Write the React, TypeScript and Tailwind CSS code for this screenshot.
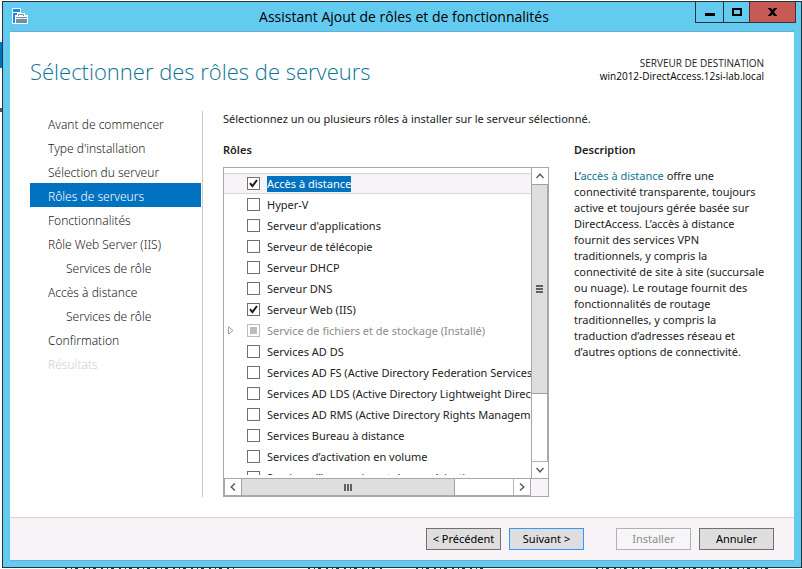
import React from "react";

type Step = {
  label: string;
  nested?: boolean;
  current?: boolean;
  disabled?: boolean;
};

type Role = {
  label: string;
  checked?: boolean;
  selected?: boolean;
  installed?: boolean;
};

const steps: Step[] = [
  { label: "Avant de commencer" },
  { label: "Type d'installation" },
  { label: "Sélection du serveur" },
  { label: "Rôles de serveurs", current: true },
  { label: "Fonctionnalités" },
  { label: "Rôle Web Server (IIS)" },
  { label: "Services de rôle", nested: true },
  { label: "Accès à distance" },
  { label: "Services de rôle", nested: true },
  { label: "Confirmation" },
  { label: "Résultats", disabled: true },
];

const roles: Role[] = [
  { label: "Accès à distance", checked: true, selected: true },
  { label: "Hyper-V" },
  { label: "Serveur d'applications" },
  { label: "Serveur de télécopie" },
  { label: "Serveur DHCP" },
  { label: "Serveur DNS" },
  { label: "Serveur Web (IIS)", checked: true },
  { label: "Service de fichiers et de stockage (Installé)", installed: true },
  { label: "Services AD DS" },
  { label: "Services AD FS (Active Directory Federation Services)" },
  { label: "Services AD LDS (Active Directory Lightweight Directory Services)" },
  { label: "Services AD RMS (Active Directory Rights Management Services)" },
  { label: "Services Bureau à distance" },
  { label: "Services d’activation en volume" },
  { label: "Services d’impression et de numérisation" },
];

const ServerIcon: React.FC = () => (
  <svg width="16" height="17" viewBox="0 0 16 17" aria-hidden="true">
    <path d="M0 0h9v5h4v2h3v9H0z" fill="#fff" />
    <path d="M1 1h7v3H1zM1 5h4v2H3v8H1z" fill="#1e88dc" />
    <path d="M6.5 8V6.5h5V8" fill="none" stroke="#6f8fa6" />
    <path d="M4 9h11v6H4z" fill="#6f8fa6" />
    <path d="M4 10.5h3M12 10.5h3" stroke="#fff" />
    <path d="M7 10h5v1H7z" fill="#dfe8ee" />
  </svg>
);

const TitleBar: React.FC = () => (
  <header className="grid h-[29px] grid-cols-[1fr_auto_1fr] items-start pl-[9px] pr-[5px]">
    <div className="pt-[6px]">
      <ServerIcon />
    </div>
    <h1 className="text-[14px] leading-[29px] text-black">
      Assistant Ajout de rôles et de fonctionnalités
    </h1>
    <div className="flex justify-end">
      <button
        type="button"
        aria-label="Réduire"
        className="flex h-[21px] w-[28px] items-center justify-center border-b border-l border-[#263238]"
      >
        <svg width="10" height="10" viewBox="0 0 10 10">
          <path d="M0 6h10v3H0z" />
        </svg>
      </button>
      <button
        type="button"
        aria-label="Agrandir"
        className="flex h-[21px] w-[26px] items-center justify-center border-b border-l border-[#263238]"
      >
        <svg width="10" height="8" viewBox="0 0 10 8">
          <path d="M1 1h8v6H1z" fill="none" stroke="#000" strokeWidth="2" />
        </svg>
      </button>
      <button
        type="button"
        aria-label="Fermer"
        className="flex h-[21px] w-[47px] items-center justify-center border-x border-b border-[#4a2b2e] bg-[#c75a54]"
      >
        <svg width="9" height="8" viewBox="0 0 9 8">
          <path d="M1.5 0l6 8M7.5 0l-6 8" stroke="#000" strokeWidth="2.4" />
          <path d="M0 0h3v1H0zM6 0h3v1H6zM0 7h3v1H0zM6 7h3v1H6z" />
        </svg>
      </button>
    </div>
  </header>
);

const StepList: React.FC = () => (
  <nav className="w-[173px] shrink-0 border-r border-[#cbcbcb] pr-px">
    <ul className="font-['Noto_Sans',sans-serif] text-[12px] font-light leading-[21px]">
      {steps.map((step, i) => (
        <li
          key={i}
          className={
            step.current
              ? "bg-[#0072bf] pt-[3px] text-white"
              : step.disabled
                ? "pt-[3px] text-[#cfcfcf]"
                : "pt-[3px] text-[#222]"
          }
        >
          <a
            href="#"
            aria-current={step.current ? "step" : undefined}
            aria-disabled={step.disabled}
            className={step.nested ? "block pl-9" : "block pl-[18px]"}
          >
            {step.label}
          </a>
        </li>
      ))}
    </ul>
  </nav>
);

const RoleRow: React.FC<{ role: Role }> = ({ role }) => (
  <li
    className={
      role.selected
        ? "flex h-[21px] items-center border-y border-[#d9d7da] bg-[#f7f3f7]"
        : "flex h-[21px] items-center"
    }
  >
    <div className="w-[23px] shrink-0 pl-1">
      {role.installed && (
        <svg width="6" height="9" viewBox="0 0 6 9" aria-hidden="true">
          <path d="M0.5 0.8v7.4L5 4.5z" fill="none" stroke="#a0a0a0" />
        </svg>
      )}
    </div>
    <label className="flex items-center gap-[7px] whitespace-nowrap">
      <span className="grid">
        <input
          type="checkbox"
          defaultChecked={role.checked}
          disabled={role.installed}
          className="peer col-start-1 row-start-1 size-[13px] appearance-none border border-[#707070] bg-white disabled:border-[#bcbcbc]"
        />
        <svg
          width="13"
          height="13"
          viewBox="0 0 13 13"
          aria-hidden="true"
          className="pointer-events-none invisible col-start-1 row-start-1 peer-checked:visible"
        >
          <path d="M3 6.2L5.4 9.2L10 3" fill="none" stroke="#1c1c1c" strokeWidth="2" />
        </svg>
        {role.installed && (
          <span className="col-start-1 row-start-1 m-[3px] size-[7px] bg-[#bcbcbc]" />
        )}
      </span>
      <span
        className={
          role.selected
            ? "bg-[#0072bf] leading-4 text-white"
            : role.installed
              ? "leading-4 text-[#8c8c8c]"
              : "leading-4"
        }
      >
        {role.label}
      </span>
    </label>
  </li>
);

const arrowButton =
  "flex size-4 shrink-0 items-center justify-center bg-white text-[#606060]";

const RoleTree: React.FC = () => (
  <div className="grid grid-cols-[minmax(0,1fr)_17px] border border-[#a8a8a8]">
    <ul
      aria-labelledby="roles-label"
      className="mb-[3px] h-[307px] overflow-hidden pt-[5px]"
    >
      {roles.map((role) => (
        <RoleRow key={role.label} role={role} />
      ))}
    </ul>
    <div className="flex flex-col border-x border-[#a8a8a8]">
      <button type="button" aria-label="Haut" className={arrowButton}>
        <svg width="8" height="6" viewBox="0 0 8 6">
          <path d="M0.5 5L4 1.2L7.5 5" fill="none" stroke="currentColor" strokeWidth="1.5" />
        </svg>
      </button>
      <div className="flex h-[210px] flex-col items-center justify-center gap-px border-y border-[#a0a0a0] bg-[#dedede]">
        <div className="h-[2px] w-[7px] bg-[#606060]" />
        <div className="h-[2px] w-[7px] bg-[#606060]" />
        <div className="h-[2px] w-[7px] bg-[#606060]" />
      </div>
      <div className="flex-1 border-b border-[#b4b4b4]" />
      <button type="button" aria-label="Bas" className={arrowButton}>
        <svg width="8" height="6" viewBox="0 0 8 6">
          <path d="M0.5 1L4 4.8L7.5 1" fill="none" stroke="currentColor" strokeWidth="1.5" />
        </svg>
      </button>
    </div>
    <div className="flex h-[18px] border border-[#a8a8a8]">
      <button type="button" aria-label="Gauche" className={arrowButton}>
        <svg width="6" height="8" viewBox="0 0 6 8">
          <path d="M5 0.5L1.2 4L5 7.5" fill="none" stroke="currentColor" strokeWidth="1.5" />
        </svg>
      </button>
      <div className="flex w-[214px] items-center justify-center gap-px border-x border-[#a0a0a0] bg-[#dedede]">
        <div className="h-[7px] w-[2px] bg-[#606060]" />
        <div className="h-[7px] w-[2px] bg-[#606060]" />
        <div className="h-[7px] w-[2px] bg-[#606060]" />
      </div>
      <div className="flex-1 border-r border-[#b4b4b4]" />
      <button type="button" aria-label="Droite" className={arrowButton}>
        <svg width="6" height="8" viewBox="0 0 6 8">
          <path d="M1 0.5L4.8 4L1 7.5" fill="none" stroke="currentColor" strokeWidth="1.5" />
        </svg>
      </button>
    </div>
    <div className="border-t border-[#a8a8a8] bg-[#f7f3f7]" />
  </div>
);

const Footer: React.FC = () => {
  const button = "h-[22px] w-[75px] border";
  return (
    <footer className="flex justify-end gap-8 border-t border-[#d9d7da] bg-[#f7f3f7] py-[10px] pr-5 font-['Noto_Sans',sans-serif] text-[11px] text-black">
      <div className="flex gap-2">
        <button type="button" className={`${button} border-[#707070] bg-[#dedede]`}>
          &lt; Précédent
        </button>
        <button type="button" className={`${button} border-[#3399ff] bg-[#dedede]`}>
          Suivant &gt;
        </button>
      </div>
      <div className="flex gap-2">
        <button
          type="button"
          disabled
          className={`${button} border-[#adb2b5] bg-[#f7f5f7] text-[#8c8c8c]`}
        >
          Installer
        </button>
        <button type="button" className={`${button} border-[#707070] bg-[#dedede]`}>
          Annuler
        </button>
      </div>
    </footer>
  );
};

// what shows of the window behind the wizard
const Backdrop: React.FC = () => (
  <div aria-hidden="true">
    <div className="absolute left-0 top-[42px] h-[26px] w-[2px] bg-[#0072bf]" />
    <div className="absolute left-0 top-[108px] h-1 w-[2px] bg-[#555]" />
    <svg className="absolute bottom-0 left-0" width="802" height="1">
      <path
        d="M65 .5h170M308 .5h78M416 .5h68M596 .5h60M665 .5h108"
        stroke="#333"
        strokeDasharray="2 4 1 3 3 5"
      />
    </svg>
  </div>
);

const App: React.FC = () => {
  return (
    <div className="relative flex min-h-screen flex-col bg-white pb-px pl-[2px] pt-px font-['Open_Sans','Noto_Sans',sans-serif] text-[#222]">
      <Backdrop />
      <div className="flex flex-1 flex-col border border-[#263238] bg-[#63cbef]">
        <TitleBar />
        <div className="mx-[7px] mb-[6px] flex flex-1 flex-col border-y border-[#6aaed6] bg-white">
          <div className="flex items-start justify-between pl-5 pr-[30px] pt-6">
            <h2 className="text-[22px] font-light leading-[30px] text-[#0b7595]">
              Sélectionner des rôles de serveurs
            </h2>
            <p className="pt-px text-right text-[10px] leading-[13px]">
              SERVEUR DE DESTINATION
              <br />
              <span className="text-black">win2012-DirectAccess.12si-lab.local</span>
            </p>
          </div>
          <div className="flex flex-1 pb-5 pl-5 pr-5 pt-[25px]">
            <StepList />
            <main className="min-w-0 flex-1 pl-5 font-['Noto_Sans',sans-serif] text-[11px]">
              <p className="leading-4">
                Sélectionnez un ou plusieurs rôles à installer sur le serveur
                sélectionné.
              </p>
              <div className="grid grid-cols-[minmax(0,1fr)_200px] gap-x-[25px] pt-[15px]">
                <section>
                  <h3 id="roles-label" className="pb-[9px] font-semibold leading-4">
                    Rôles
                  </h3>
                  <RoleTree />
                </section>
                <section>
                  <h3 className="pb-[10px] font-semibold leading-4">Description</h3>
                  <p className="pr-[7px] leading-4">
                    L’
                    <a href="#" className="text-[#0b7595]">
                      accès à distance
                    </a>{" "}
                    offre une connectivité transparente, toujours active et
                    toujours gérée basée sur DirectAccess. L’accès à distance
                    fournit des services VPN traditionnels, y compris la
                    connectivité de site à site (succursale ou nuage). Le routage
                    fournit des fonctionnalités de routage traditionnelles, y
                    compris la traduction d’adresses réseau et d’autres options
                    de connectivité.
                  </p>
                </section>
              </div>
            </main>
          </div>
          <Footer />
        </div>
      </div>
    </div>
  );
};

export default App;
